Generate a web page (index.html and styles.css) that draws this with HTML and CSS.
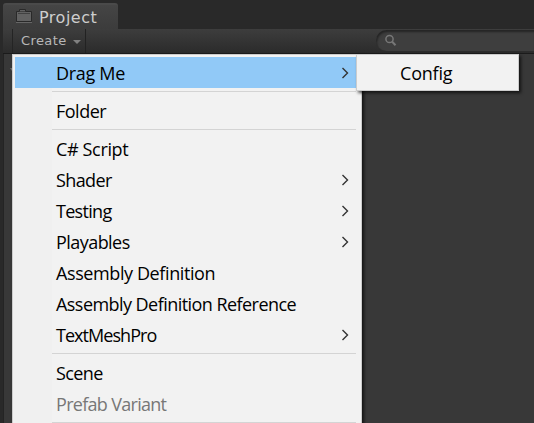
FILE: index.html
```
<!DOCTYPE html>
<html lang="en">
<head>
<meta charset="utf-8">
<title>Project</title>
<link rel="stylesheet" href="styles.css">
</head>
<body>
<div class="panel">
  <div class="tab">
    <svg class="folder" width="18" height="15" viewBox="0 0 18 15"><path d="M1.500 13.500v-10h3v-2h6v2h6v10z" fill="#626262" stroke="#292929"/><path d="M3 5.500h12M5 3.500h5" stroke="#414141"/><path d="M1 14.500h16" stroke="#666"/></svg>
    <span>Project</span>
  </div>
  <div class="toolbar">
    <div class="create"><span>Create</span><i class="caret"></i></div>
    <div class="search"><svg width="14" height="14" viewBox="0 0 14 14" fill="none" stroke="#777"><circle cx="5.500" cy="5" r="3.600" stroke-width="1.500"/><path d="M8 7.500l3.500 3.800" stroke-width="2"/></svg></div>
  </div>
  <div class="content"><i class="fold"></i></div>
</div>
<div class="menu">
  <div class="item active"><span class="drag">Drag Me</span><svg class="arrow" viewBox="0 0 8 12"><path d="M1.500 1l5 5-5 5"/></svg></div>
  <hr>
  <div class="item"><span class="fol">Folder</span></div>
  <hr>
  <div class="item"><span class="script">C# Script</span></div>
  <div class="item"><span class="shader">Shader</span><svg class="arrow" viewBox="0 0 8 12"><path d="M1.500 1l5 5-5 5"/></svg></div>
  <div class="item"><span class="testing">Testing</span><svg class="arrow" viewBox="0 0 8 12"><path d="M1.500 1l5 5-5 5"/></svg></div>
  <div class="item"><span class="playables">Playables</span><svg class="arrow" viewBox="0 0 8 12"><path d="M1.500 1l5 5-5 5"/></svg></div>
  <div class="item"><span class="asm">Assembly Definition</span></div>
  <div class="item"><span class="asmref">Assembly Definition Reference</span></div>
  <div class="item"><span class="tmp">TextMeshPro</span><svg class="arrow" viewBox="0 0 8 12"><path d="M1.500 1l5 5-5 5"/></svg></div>
  <hr>
  <div class="item"><span class="scene">Scene</span></div>
  <div class="item disabled"><span class="prefab">Prefab Variant</span></div>
  <hr>
</div>
<div class="menu submenu"><div class="item"><span class="config">Config</span></div></div>
</body>
</html>
```
FILE: styles.css
```
* { box-sizing: border-box; }
body { margin: 0; width: 534px; height: 423px; overflow: hidden; position: relative; background: #292929; }
.panel { height: 423px; padding: 3px 0 0 3px; display: flex; flex-direction: column; font-family: "DejaVu Sans", sans-serif; }
.tab { width: 115px; height: 26px; flex: none; display: flex; align-items: center; gap: 6px; padding: 1px 0 0 12px; border-top: 2px solid #4a4a4a; border-radius: 3px 3px 0 0; background: linear-gradient(#454545, #3c3c3c); color: #cecece; font-size: 16px; letter-spacing: .5px; }
.folder { margin-top: -4px; flex: none; }
.toolbar { height: 25px; flex: none; display: flex; justify-content: space-between; background: linear-gradient(#3d3d3d, #2b2b2b); border-bottom: 1px solid #1b1b1b; }
.create { width: 74px; margin-left: 9px; padding: 0 0 1px 8px; display: flex; align-items: center; gap: 6px; border-left: 1px solid #242424; border-right: 1px solid #222; color: #b8b8b8; font-size: 13px; letter-spacing: .4px; }
.caret { border: 4px solid transparent; border-top-color: #818181; border-bottom: 0; margin-top: 3px; }
.search { width: 158px; height: 21px; margin-top: 1px; padding: 4px 0 0 8px; border-radius: 11px 0 0 11px; background: #3e3e3e; box-shadow: inset 1px 2px 2px #252525; }
.search svg { display: block; }
.content { flex: 1; background: #383838; border-left: 1px solid #242424; padding: 14px 0 0 6px; }
.fold { display: block; width: 0; border: 4px solid transparent; border-top: 6px solid #707070; }
.menu { position: absolute; left: 12px; top: 54px; width: 350px; height: 374px; padding: 2px 5px 0 2px; background: linear-gradient(90deg, #f0f0f0 39px, #f2f2f2 39px); border: 1px solid #ccc; box-shadow: 2px 2px 3px rgba(0,0,0,.65); font: 18px/31px "Open Sans", "Noto Sans", sans-serif; color: #000; }
.item { height: 31px; padding: 0 7px 0 41px; display: flex; align-items: center; justify-content: space-between; white-space: nowrap; }
.item span { padding-top: 2px; }
.active { background: #91c9f7; }
.disabled { color: #777; }
.arrow { width: 8px; height: 12px; fill: none; stroke: #333; stroke-width: 1.4; }
.menu hr { height: 1px; margin: 3px 0 3px 37px; border: 0; background: #d4d4d4; }
.submenu { left: 356px; width: 163px; height: 37px; background: #f2f2f2; }
.drag { letter-spacing: -.3px; }
.fol { letter-spacing: -.5px; }
.script { letter-spacing: -.35px; }
.shader { letter-spacing: -.6px; }
.testing { letter-spacing: -.7px; }
.playables { letter-spacing: -.55px; }
.asm { letter-spacing: -.4px; }
.asmref { letter-spacing: -.55px; }
.tmp { letter-spacing: -.95px; }
.scene { letter-spacing: -.6px; }
.prefab { letter-spacing: -.7px; }
.config { letter-spacing: -.2px; }
```
